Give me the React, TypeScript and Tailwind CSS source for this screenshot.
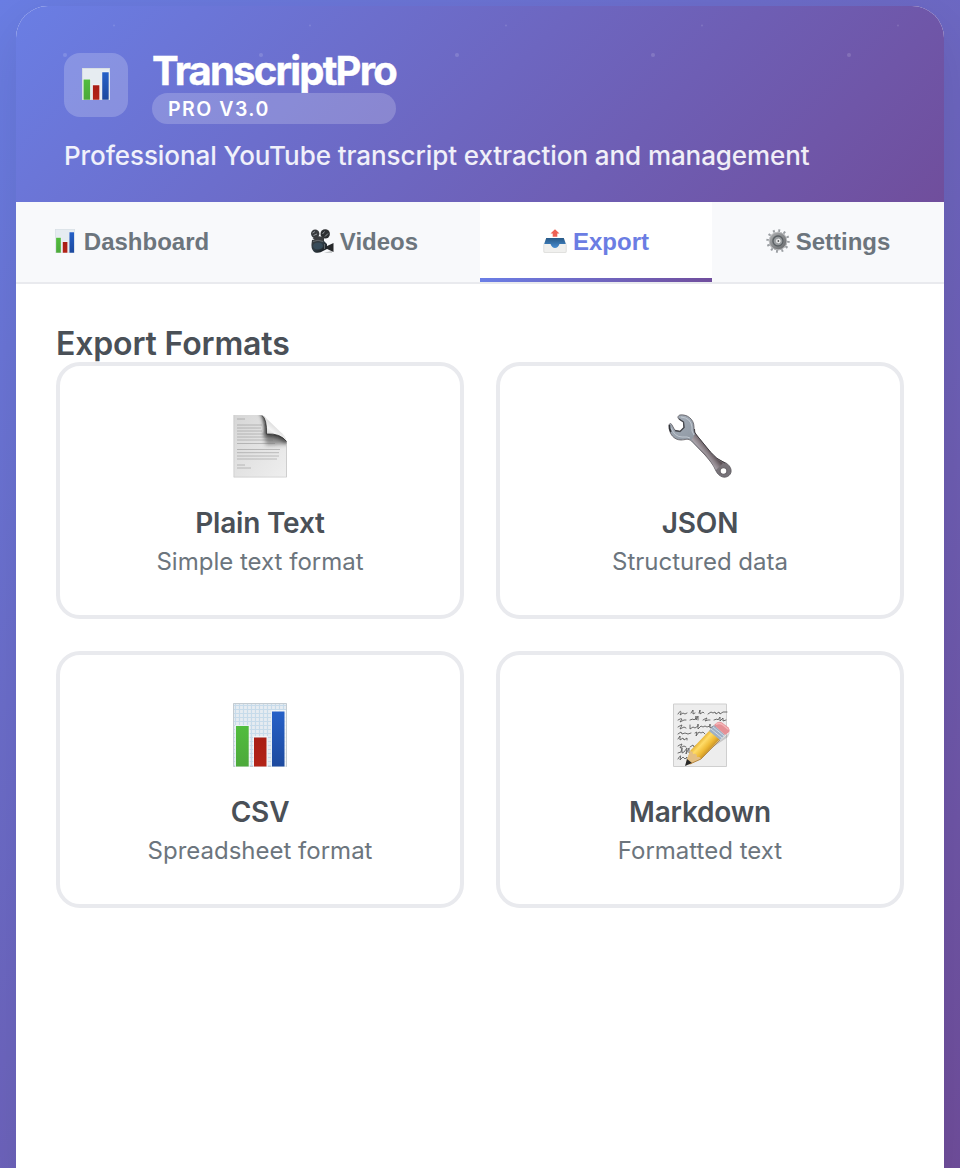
import type { ReactNode } from "react";

function ChartIcon({ className, grid = true }: { className: string; grid?: boolean }) {
  return (
    <svg viewBox="0 0 54 64" className={className} preserveAspectRatio="none">
      <defs>
        <pattern id="chart-grid" width="4" height="4" patternUnits="userSpaceOnUse">
          <path d="M0 2.500H4M2.500 0V4" stroke="#bcd6e8" strokeWidth="1.200" opacity=".75" />
        </pattern>
        <linearGradient id="bar-g" x2="0" y2="1"><stop stopColor="#51bd3d" /><stop offset="1" stopColor="#4da93b" /></linearGradient>
        <linearGradient id="bar-r" x2="0" y2="1"><stop stopColor="#a81d14" /><stop offset="1" stopColor="#b32418" /></linearGradient>
        <linearGradient id="bar-b" x2="0" y2="1"><stop stopColor="#2560c8" /><stop offset="1" stopColor="#1d4a9e" /></linearGradient>
      </defs>
      <path d="M0 0H54V64H0Z" fill="#e6ecf1" />
      {grid && <path d="M0 0H54V64H0Z" fill="url(#chart-grid)" />}
      <path d="M.5 .5H53.500V63.500H.5Z" fill="none" stroke="#c4ccd2" />
      <path d="M2 22H17V64H2ZM20 33H35V64H20ZM38 7H53V64H38Z" fill="#f7fafb" opacity=".7" />
      <path d="M3 23H15.700V63.500H3Z" fill="url(#bar-g)" />
      <path d="M21 34.500H33.500V63.500H21Z" fill="url(#bar-r)" />
      <path d="M39 8.500H51.500V63.500H39Z" fill="url(#bar-b)" />
    </svg>
  );
}

function CameraIcon() {
  return (
    <svg viewBox="0 0 24 24" className="h-6 w-6">
      <defs><linearGradient id="cam" x2="1" y2="1"><stop stopColor="#383b3d" /><stop offset=".5" stopColor="#2f3b43" /><stop offset="1" stopColor="#111214" /></linearGradient></defs>
      <path d="M16 17.500 23.500 14V23L16 19.500Z" fill="#26282a" />
      <path d="M17 23 22 22V23.700L14 23.700Z" fill="#b9bbbd" />
      <path d="M2 11Q9 9 14 12L17 15V20L13 22Q10 24.500 5 23.500Q1 21 1.500 15Z" fill="url(#cam)" />
      <circle cx="5.200" cy="4.700" r="4.200" fill="#3a3c3e" />
      <circle cx="15.200" cy="4.900" r="4.700" fill="#2d2f31" />
      <path d="M7 7 14 8 14 12 6 12 2.500 9Z" fill="#3b3d3f" />
      <path d="M2.500 4 5 2.500M3.500 6.500 7 5M12.500 5 14.500 2.500M15 7.500 18 4.500" stroke="#92979b" strokeWidth="1" />
      <ellipse cx="8" cy="17" rx="5" ry="3.500" fill="#3a5262" opacity=".75" />
      <path d="M3 12.500Q8 10 13 12.500M14.500 15V20" stroke="#7b8083" strokeWidth=".7" fill="none" />
    </svg>
  );
}

function OutboxIcon() {
  return (
    <svg viewBox="0 0 24 24" className="h-6 w-6">
      <defs><linearGradient id="tray" x2="0" y2="1"><stop stopColor="#275987" /><stop offset="1" stopColor="#488dd2" /></linearGradient></defs>
      <path d="M3 9H21L23.700 15V23Q23.700 24 22.500 24H1.500Q.3 24 .3 23V15Z" fill="#f0f0ee" />
      <path d="M3.200 9H20.800L22.800 15H16.500Q15 19 12 19Q9 19 7.500 15H1.200Z" fill="url(#tray)" />
      <path d="M.8 15.500V22.500Q.8 23.500 2 23.500H22Q23.200 23.500 23.200 22.500V15.500" fill="none" stroke="#d7d7d5" strokeWidth=".6" />
      <path d="M12 .3 16.500 4.500H14.300V7.800H9.700V4.500H7.500Z" fill="#ed6154" />
    </svg>
  );
}

function GearIcon() {
  return (
    <svg viewBox="0 0 24 24" className="h-6 w-6">
      <defs><linearGradient id="gear" x2="1" y2="1"><stop stopColor="#a9abad" /><stop offset="1" stopColor="#696b6e" /></linearGradient></defs>
      <circle cx="12" cy="12" r="10.400" fill="none" stroke="#9a9ea2" strokeWidth="2.600" strokeDasharray="1.900 3.546" />
      <circle cx="12" cy="12" r="7.600" fill="#84888a" stroke="url(#gear)" strokeWidth="3.200" />
      <circle cx="12" cy="12" r="8.800" fill="none" stroke="#c6c8ca" strokeWidth=".8" />
      <circle cx="12" cy="12" r="5" fill="#999da0" stroke="#5a5f63" strokeWidth="1.300" />
      <circle cx="12.300" cy="12" r="2.800" fill="#eeeff0" stroke="#8b8e91" strokeWidth=".7" />
      <path d="M11.700 10.500 13.500 12 11.700 13.500Z" fill="#46484b" />
    </svg>
  );
}

function PageIcon() {
  const lines = [
    [4, 5, 8], [4, 11, 25], [4, 14, 24], [4, 17, 25], [4, 20, 27], [4, 23, 30], [4, 26, 36], [4, 29.5, 38],
    [4, 35.5, 43], [4, 38.7, 42], [4, 42, 42], [4, 45, 40], [4, 51, 8], [4, 54, 14],
  ];
  return (
    <svg viewBox="0 0 54 64" className="h-16 w-[54px]">
      <defs>
        <linearGradient id="paper" x2="1" y2="1"><stop stopColor="#d6d6d6" /><stop offset=".5" stopColor="#e3e3e3" /><stop offset="1" stopColor="#efefef" /></linearGradient>
        <linearGradient id="curl" gradientUnits="userSpaceOnUse" x1="34" y1="21" x2="42" y2="11"><stop stopColor="#c9c9c9" /><stop offset=".5" stopColor="#f4f4f4" /><stop offset="1" stopColor="#dcdcdc" /></linearGradient>
        <filter id="soft" x="-50%" y="-50%" width="200%" height="200%"><feGaussianBlur stdDeviation="2.200" /></filter>
        <clipPath id="sheet"><path d="M.5 1H27Q32 1 34 8L48 21Q54 24 54 31V63.500H.5Z" /></clipPath>
      </defs>
      <g clipPath="url(#sheet)">
        <path d="M0 0H54V64H0Z" fill="url(#paper)" />
        <path d="M27 -3Q33 6 32 22Q46 21 55 30V24L48 16 35 -3Z" fill="#111" filter="url(#soft)" />
        <path d="M31 19H42L54 24V30L33 31Z" fill="#444" opacity=".55" filter="url(#soft)" />
        {lines.map(([x, y, w]) => <path key={y} d={`M${x} ${y}h${w}`} stroke="#777" strokeWidth=".9" opacity=".45" />)}
        <path d="M.8 1V63.200H53.500V30" fill="none" stroke="#c5c5c5" strokeWidth=".8" />
      </g>
      <path d="M28 1Q34 4 33.500 20Q47 19 53.500 27Q52 21 47 17.500L34 5Q31 1 28 1Z" fill="url(#curl)" />
      <path d="M29 1.500Q34 5 33.500 20Q47 19 53.500 27.500" fill="none" stroke="#333" strokeWidth=".8" />
    </svg>
  );
}

function WrenchIcon() {
  return (
    <svg viewBox="0 0 64 64" className="h-16 w-16">
      <defs>
        <linearGradient id="steel" x1=".15" y1="0" x2=".8" y2="1"><stop stopColor="#a4adb8" /><stop offset=".4" stopColor="#8f98a3" /><stop offset=".65" stopColor="#7b7076" /><stop offset="1" stopColor="#777379" /></linearGradient>
        <linearGradient id="handle" gradientUnits="userSpaceOnUse" x1="41" y1="34" x2="32" y2="41"><stop stopColor="#5b5055" /><stop offset=".35" stopColor="#8b8187" /><stop offset=".7" stopColor="#aaa4ab" /><stop offset="1" stopColor="#716569" /></linearGradient>
      </defs>
      <path d="M12 1C19 0 26 5 26 13C26 16 26 18 28 20.500L42 38C47 44 52 47 58 49C63 52 65 58 61 61.500C57 65 51 63 48 57C45 50 42 47 37 41L23.500 27C20 24 17 26 13 26C6 26 1 20 1 12C1 9 3 9 4 11L7 16.500 12 17.500 16 13.500 15.500 8 11 5C9 4 10 1.500 12 1Z" fill="url(#steel)" stroke="#5a575c" strokeWidth=".8" />
      <path d="M27 20 42 38Q47 45 55 49L48 56Q44 48 38 41L23.500 26Z" fill="url(#handle)" />
      <path d="M3 14Q7 23 14 23Q20 22.500 22 24M13 3Q23 4 24 13Q23 17 26 21" fill="none" stroke="#c5ccd4" strokeWidth=".9" />
      <path d="M26.500 15Q26 18.500 28.500 21L42.500 38Q48 45 57 49" fill="none" stroke="#403b40" strokeWidth="1" />
      <path d="M7 16.500 12 17.500 16 13.500 15.500 8 11 5" fill="none" stroke="#47494f" strokeWidth="1.300" />
      <path d="M1.500 11Q1 15 3 18" fill="none" stroke="#303237" strokeWidth="1.500" />
      <circle cx="55.500" cy="57" r="3.400" fill="#fff" stroke="#6b666b" strokeWidth="1.200" />
    </svg>
  );
}

function MemoIcon() {
  return (
    <svg viewBox="0 0 64 64" className="h-16 w-16">
      <defs>
        <linearGradient id="pencil" gradientUnits="userSpaceOnUse" x1="32" y1="37" x2="44" y2="48"><stop stopColor="#e6b336" /><stop offset=".25" stopColor="#ffdc68" /><stop offset=".6" stopColor="#efba35" /><stop offset="1" stopColor="#b57e20" /></linearGradient>
      </defs>
      <path d="M5.500 1H58.500V63.500H5.500Z" fill="#ededed" stroke="#cfcfcf" />
      <path d="M10 11q3-5 3-1l-1 2 3-2 2 1 2-1m4 0 2-3v4l2-1m4 0 1-3 0 4 3-2 1 1m4 1 3-2 2 1 2-1 1 2 3-2 1 2 3-2 4 0M10 17q3-2 4-1l-2 3 4-2 2 0m4 0 3-1 1 1 2-2v-2l0 4 2-4v4m5 0q3-2 4-2l-2 3 3-1 2 0m4 0 3-1 1 1 2-3v4l3-3 0 3 3-1M10 24q3-2 4-2l-2 4 4-2 2 1m4-3v4l3-2 2 1 3-2 0-2v5l3-3 2 1 2-1 2 1 3-1 0-2v4l4-2 2 1M10 31l3-2 1 2 3-1 3 1 3-1m4 0 2-1-1 4 3-4 2 1 2-1 2 2m4 0 3-2 2 0m3-2v4l3-2M10 36l2-3v4l3-2 1 2 3-2v2M10 43q3-2 4-2l-2 4 4-2 2 1m4 0 3-2 1 2 3-2 1 2 2-1M10 50l3-1 1-4v5l2-1 3-4-1 6 3-6 0 5 4-2 3 0M10 56q4-7 2 1l3-3 2 2 2-2v2m4 0 2-4v4l3-2" fill="none" stroke="#555" strokeWidth=".85" strokeLinejoin="round" strokeLinecap="round" />
      <path d="M20 61 60 34 62 29 29 57Z" fill="#555" opacity=".25" />
      <path d="M22 48 42 27 52 36 33 56 22 61Q18 62 19 57Z" fill="url(#pencil)" />
      <path d="M22 48Q25 48 25 51Q29 50 29 54Q32 53 33 56L21 61.500 18 60Z" fill="#e4bf83" />
      <path d="M19 56 24 60 17 63Z" fill="#292929" />
      <path d="M41 28 46 22 57 32 52 37Z" fill="#9eb0c4" />
      <path d="M43 26 54 35M45 24 56 33" stroke="#d3dce7" strokeWidth="1" />
      <path d="M46 22 49 19.500Q51 18 54 19.500L60.500 24.500Q63 28 60 30L57 32Z" fill="#e59196" />
      <path d="M48 21.500Q51 19 55 22L60.500 26.500" fill="none" stroke="#f5b5b8" strokeWidth="1.500" />
      <path d="M52 37 33 56 22 61" fill="none" stroke="#a06d25" strokeWidth=".7" />
    </svg>
  );
}

function Tab({ icon, label, active = false }: { icon: ReactNode; label: string; active?: boolean }) {
  return (
    <button className={`flex flex-1 flex-col ${active ? "bg-white text-[#6b7de3]" : "text-[#6c757d]"}`}>
      <span className="flex h-[76px] w-full items-center justify-center pt-1 font-['Liberation_Sans',sans-serif] text-2xl font-bold">
        <span className="-mt-0.5">{icon}</span>
        <span className="ml-[6px]">{label}</span>
      </span>
      <span className={`h-1 w-full ${active ? "bg-linear-to-r from-[#6a7ee6] to-[#704e9d]" : ""}`} />
    </button>
  );
}

function FormatCard({ icon, title, text }: { icon: ReactNode; title: string; text: string }) {
  return (
    <button className="flex h-[257px] flex-col items-center rounded-3xl border-4 border-[#e9eaee] bg-white pt-12">
      {icon}
      <span className="mt-[27px] text-[28px] leading-9 font-semibold tracking-[-0.2px] text-[#4a5057]">{title}</span>
      <span className="mt-[5px] text-2xl leading-8 text-[#6c757d]">{text}</span>
    </button>
  );
}

export default function App() {
  return (
    <div className="h-[1168px] overflow-hidden bg-[linear-gradient(135deg,#6a7ee4_0%,#704e9c_100%)] px-4 pt-1.5 font-['Inter',sans-serif]">
      <main className="h-[1200px] overflow-hidden rounded-[32px] bg-white shadow-[0_16px_64px_rgba(0,0,0,0.1)]">
        <header className="relative h-[196px] bg-[linear-gradient(135deg,#6a7ee4_0%,#704e9c_100%)] px-12 pt-[47px] text-white">
          <svg className="absolute inset-0 h-full w-full">
            <defs>
              <pattern id="dots" width="196" height="196" patternUnits="userSpaceOnUse">
                <circle cx="49" cy="49" r="2" fill="#fff" opacity=".14" />
                <circle cx="98" cy="19.600" r="1" fill="#fff" opacity=".12" />
              </pattern>
            </defs>
            <rect width="100%" height="100%" fill="url(#dots)" />
          </svg>
          <div className="relative flex gap-6">
            <div className="flex h-16 w-16 items-center justify-center rounded-2xl bg-white/20">
              <ChartIcon className="mt-[-2px] h-8 w-7" grid={false} />
            </div>
            <div className="w-[244px]">
              <h1 className="h-10 text-[40px] leading-9 font-bold tracking-[-1.8px] whitespace-nowrap [-webkit-text-stroke:0.4px_white]">TranscriptPro</h1>
              <div className="h-[31px] rounded-full bg-white/20 px-4 text-[19.500px] leading-[32px] font-semibold tracking-[1.5px]">PRO V3.0</div>
            </div>
          </div>
          <p className="relative mt-4 text-[26px] leading-8 font-medium tracking-[-0.08px] whitespace-nowrap text-white/90">Professional YouTube transcript extraction and management</p>
        </header>
        <nav className="flex h-[82px] border-b-2 border-[#e9eaee] bg-[#f8f9fb]">
          <Tab icon={<ChartIcon className="mr-[3px] h-6 w-5" grid={false} />} label="Dashboard" />
          <Tab icon={<CameraIcon />} label="Videos" />
          <Tab icon={<OutboxIcon />} label="Export" active />
          <Tab icon={<GearIcon />} label="Settings" />
        </nav>
        <section className="px-10 pt-10">
          <h2 className="h-[38px] text-[32px] leading-10 font-semibold tracking-[-0.15px] text-[#4a5057]">Export Formats</h2>
          <div className="grid grid-cols-2 gap-x-8 gap-y-8">
            <FormatCard icon={<PageIcon />} title="Plain Text" text="Simple text format" />
            <FormatCard icon={<WrenchIcon />} title="JSON" text="Structured data" />
            <FormatCard icon={<ChartIcon className="h-16 w-[54px]" />} title="CSV" text="Spreadsheet format" />
            <FormatCard icon={<MemoIcon />} title="Markdown" text="Formatted text" />
          </div>
        </section>
      </main>
    </div>
  );
}
